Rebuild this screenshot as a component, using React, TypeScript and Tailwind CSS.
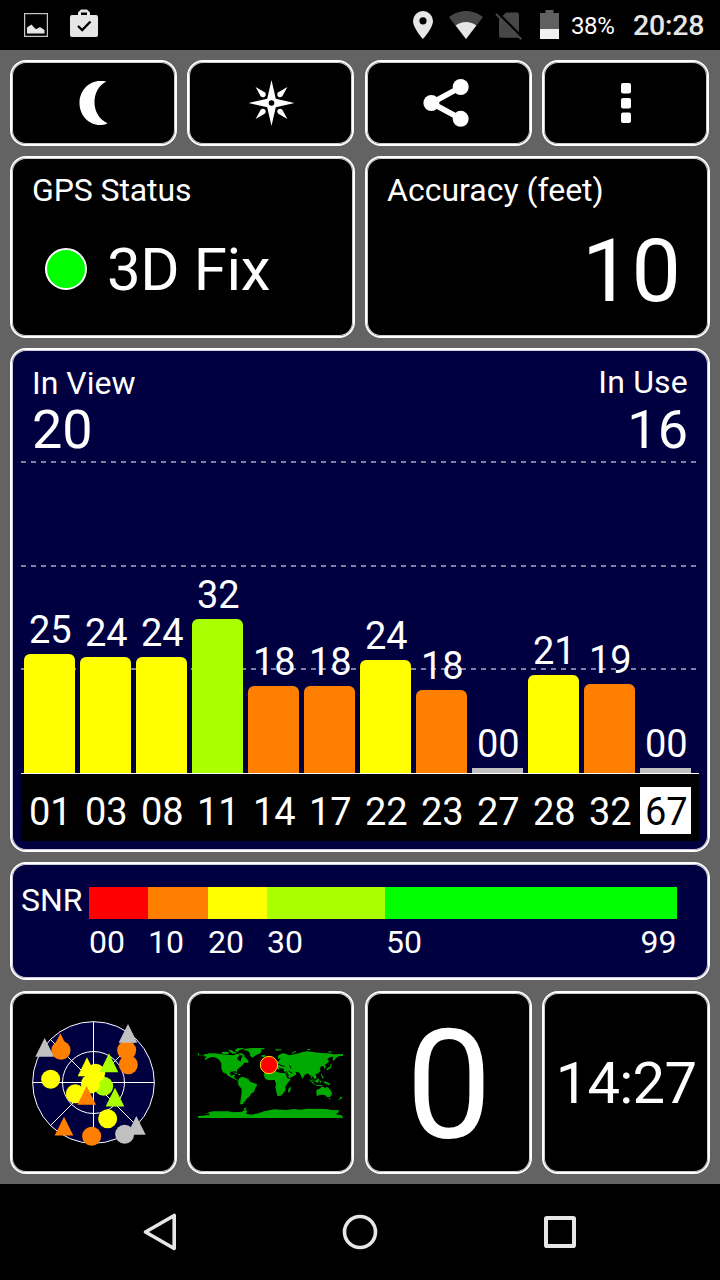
import type { ReactNode } from 'react';

const YELLOW = '#ffff00';
const ORANGE = '#ff8000';
const LIME = '#aaff00';
const SILVER = '#c0c0c0';

type Satellite = { id: string; snr: string; height: number; color: string; selected?: boolean };

const satellites: Satellite[] = [
  { id: '01', snr: '25', height: 119, color: YELLOW },
  { id: '03', snr: '24', height: 116, color: YELLOW },
  { id: '08', snr: '24', height: 116, color: YELLOW },
  { id: '11', snr: '32', height: 154, color: LIME },
  { id: '14', snr: '18', height: 87, color: ORANGE },
  { id: '17', snr: '18', height: 87, color: ORANGE },
  { id: '22', snr: '24', height: 113, color: YELLOW },
  { id: '23', snr: '18', height: 83, color: ORANGE },
  { id: '27', snr: '00', height: 5, color: SILVER },
  { id: '28', snr: '21', height: 98, color: YELLOW },
  { id: '32', snr: '19', height: 89, color: ORANGE },
  { id: '67', snr: '00', height: 5, color: SILVER, selected: true },
];

function Card({ className, children }: { className: string; children: ReactNode }) {
  return (
    <div
      className={`shrink-0 overflow-hidden rounded-2xl border-2 border-white shadow-[inset_0_0_0_1px_rgba(255,255,255,0.8)] ${className}`}
    >
      {children}
    </div>
  );
}

function StatusBar() {
  return (
    <header className="flex h-[50px] shrink-0 items-start bg-black">
      <svg className="mt-[13px] ml-6 shrink-0" width="24" height="24" viewBox="0 0 24 24">
        <rect x=".6" y=".6" width="22.8" height="22.8" fill="none" stroke="#c8c8c8" strokeWidth="1.2" />
        <path d="M3 20.5V14.5L7.5 11.5L11 15.5L12.5 16L16 14L20.5 17V20.5Z" fill="#e6e6e6" />
      </svg>
      <svg className="mt-[9px] ml-[22px] shrink-0" width="28" height="28" viewBox="0 0 28 28">
        <path
          fillRule="evenodd"
          d="M2 6H8V3.500L11 .500H17L20 3.500V6H26Q28 6 28 8V25.500Q28 28 26 28H2Q0 28 0 25.500V8Q0 6 2 6ZM11 6H17V3.500H11Z"
          fill="#e6e6e6"
        />
        <path d="M8 17L12.200 21L20.500 12.500" fill="none" stroke="#000" strokeWidth="2.400" />
      </svg>
      <svg className="mt-[11px] ml-[315px] shrink-0" width="20" height="28" viewBox="0 0 20 28">
        <path
          fillRule="evenodd"
          d="M10 0A10 10 0 0 0 0 10C0 17 10 28 10 28S20 17 20 10A10 10 0 0 0 10 0ZM10 6.200A3.600 3.600 0 1 1 10 13.400A3.600 3.600 0 0 1 10 6.200Z"
          fill="#e6e6e6"
        />
      </svg>
      <svg className="mt-[11px] ml-4 shrink-0" width="34" height="28" viewBox="0 0 34 28">
        <path d="M17 28L0 6.200C4.500 2.500 10.500 0 17 0S29.500 2.500 34 6.200Z" fill="#474747" />
        <path d="M17 28L6.700 14.600Q11 11 17 11T27.300 14.600Z" fill="#e6e6e6" />
      </svg>
      <svg className="mt-3 ml-3 shrink-0" width="27" height="28" viewBox="0 0 27 28">
        <path d="M11 .5H22Q24 .5 24 2.500V25.700H5.500Q4 25.700 4 24V7.500Z" fill="#474747" />
        <path d="M3 1L29 27" stroke="#000" strokeWidth="2.400" />
        <path d="M1 2L26.300 27.300" stroke="#474747" strokeWidth="2" />
      </svg>
      <svg className="mt-[10px] ml-[18px] shrink-0" width="19" height="29" viewBox="0 0 19 29">
        <path d="M0 3H5.500V0H13.500V3H19V19H0Z" fill="#606060" />
        <rect y="19" width="19" height="10" fill="#f0f0f0" />
      </svg>
      <span className="mt-[14px] ml-3 w-[49px] text-[24px] leading-none tracking-[-0.4px]">38%</span>
      <span className="mt-[12px] ml-[13px] text-[28.5px] leading-none font-medium tracking-[-0.2px] text-[#e6e6e6]">
        20:28
      </span>
    </header>
  );
}

function Toolbar() {
  const button = 'flex h-[86px] items-center justify-center bg-black';
  return (
    <div className="flex gap-[10px]">
      <Card className={`${button} w-[167px]`}>
        <svg width="48" height="48" viewBox="-24 -24 48 48">
          <path
            d="M12.300 -21.400C-3.500 -13.500 -3.800 12.500 13.500 20.300C11 22 8 22 6 22C-5.500 22 -14.500 12 -14.500 0S-5.500 -22 6 -22C8.500 -22 10.500 -22 12.300 -21.400Z"
            fill="#fff"
          />
        </svg>
      </Card>
      <Card className={`${button} w-[167px]`}>
        <svg width="48" height="48" viewBox="-24 -24 48 48">
          <g fill="#fff">
            <path d="M.5 -23L4.800 -4.300L23.500 0L4.800 4.300L.500 23L-3.800 4.300L-22.500 0L-3.800 -4.300Z" />
            {[45, 135, 225, 315].map((angle) => (
              <path
                key={angle}
                d="M0 -22.500L2.800 -12.500Q2.800 -9.500 0 -9.300Q-2.800 -9.500 -2.800 -12.500Z"
                transform={`translate(.5 0) rotate(${angle})`}
              />
            ))}
          </g>
          <circle cx=".5" cy="0" r="2.800" fill="#000" />
        </svg>
      </Card>
      <Card className={`${button} ml-px w-[167px]`}>
        <svg width="52" height="48" viewBox="-26 -24 52 48">
          <path d="M11.700 -15.900L-17.500 0L11.700 15.800" fill="none" stroke="#fff" strokeWidth="5.600" />
          <g fill="#fff">
            <circle cx="11.700" cy="-16" r="8" />
            <circle cx="-17.600" cy="0" r="8" />
            <circle cx="11.700" cy="15.800" r="8" />
          </g>
        </svg>
      </Card>
      <Card className={`${button} w-[167px]`}>
        <svg width="10" height="40" viewBox="0 0 10 40">
          <g fill="#fff">
            <rect width="10" height="10.500" rx="2" />
            <rect y="15" width="10" height="10.500" rx="2" />
            <rect y="29.500" width="10" height="10.500" rx="2" />
          </g>
        </svg>
      </Card>
    </div>
  );
}

function FixRow() {
  return (
    <div className="flex gap-[10px]">
      <Card className="h-[182px] w-[345px] bg-black">
        <div className="mt-4 ml-5 text-[32px] leading-none tracking-[-0.1px]">GPS Status</div>
        <div className="mt-[34px] ml-[33px] flex items-start">
          <span className="mt-[8px] size-[42px] rounded-full border-2 border-white bg-[#00ff00]" />
          <span className="ml-[20px] text-[60px] leading-none tracking-[-0.4px]">3D Fix</span>
        </div>
      </Card>
      <Card className="h-[182px] w-[345px] bg-black">
        <div className="mt-4 ml-5 text-[32px] leading-none">Accuracy (feet)</div>
        <div className="mt-[21px] mr-[27px] text-right text-[88px] leading-none">10</div>
      </Card>
    </div>
  );
}

function SignalChart() {
  return (
    <Card className="flex h-[504px] flex-col bg-[#000040] px-[9px] pt-[17px]">
      <div className="flex h-[94px] justify-between px-[11px]">
        <div>
          <div className="text-[32px] leading-none">In View</div>
          <div className="mt-[4px] text-[54px] leading-none">20</div>
        </div>
        <div className="-mt-px text-right">
          <div className="text-[32px] leading-none tracking-[0.2px]">In Use</div>
          <div className="mt-[5px] text-[54px] leading-none">16</div>
        </div>
      </div>
      <div className="relative flex h-[313px] w-[678px] items-end gap-[5px] border-b border-white pl-[3px]">
        <svg className="absolute top-0 left-0" width="678" height="312" viewBox="0 0 678 312">
          <path
            d="M0 1H676M0 105H676M0 208H676"
            fill="none"
            stroke="#8080a0"
            strokeWidth="2"
            strokeDasharray="5 5"
          />
        </svg>
        {satellites.map((sat) => (
          <div key={sat.id} className="relative flex w-[51px] flex-col items-center">
            <span className="mb-[5px] pl-[1.5px] text-[38px] leading-none">{sat.snr}</span>
            <span
              className={sat.height > 10 ? 'w-full rounded-t-[6px]' : 'w-full'}
              style={{ height: sat.height, backgroundColor: sat.color }}
            />
          </div>
        ))}
      </div>
      <div className="flex h-[67px] w-[678px] gap-[5px] bg-black pt-[13px] pl-[3px]">
        {satellites.map((sat) => (
          <div
            key={sat.id}
            className={`h-[47px] w-[51px] pt-[6px] pl-[1.5px] text-center text-[38px] leading-none ${
              sat.selected ? 'bg-white text-black' : 'text-white'
            }`}
          >
            {sat.id}
          </div>
        ))}
      </div>
    </Card>
  );
}

function SnrLegend() {
  return (
    <Card className="flex h-[118px] bg-[#000040] pl-[9px]">
      <div className="mt-[20px] w-[68px] text-[32px] leading-none">SNR</div>
      <div className="mt-[23px] w-[587.5px]">
        <div className="flex h-8">
          <div className="w-[59px] bg-[#ff0000]" />
          <div className="w-[60px] bg-[#ff8000]" />
          <div className="w-[59px] bg-[#ffff00]" />
          <div className="w-[118px] bg-[#aaff00]" />
          <div className="flex-1 bg-[#00ff00]" />
        </div>
        <div className="mt-[7px] flex text-[32px] leading-none">
          <span className="w-[59px]">00</span>
          <span className="w-[60px]">10</span>
          <span className="w-[59px]">20</span>
          <span className="w-[119px]">30</span>
          <span>50</span>
          <span className="ml-auto">99</span>
        </div>
      </div>
    </Card>
  );
}

const skyMarks: { x: number; y: number; color: string; shape: 'circle' | 'triangle' }[] = [
  { x: 151, y: 158, color: ORANGE, shape: 'triangle' },
  { x: 153, y: 181, color: ORANGE, shape: 'circle' },
  { x: 104, y: 172, color: SILVER, shape: 'triangle' },
  { x: 350, y: 181, color: ORANGE, shape: 'circle' },
  { x: 354, y: 130, color: SILVER, shape: 'triangle' },
  { x: 355, y: 224, color: ORANGE, shape: 'circle' },
  { x: 231, y: 230, color: YELLOW, shape: 'triangle' },
  { x: 281, y: 289, color: LIME, shape: 'circle' },
  { x: 257, y: 250, color: YELLOW, shape: 'circle' },
  { x: 196, y: 311, color: YELLOW, shape: 'circle' },
  { x: 241, y: 282, color: YELLOW, shape: 'circle' },
  { x: 297, y: 218, color: LIME, shape: 'triangle' },
  { x: 230, y: 316, color: ORANGE, shape: 'triangle' },
  { x: 315, y: 321, color: LIME, shape: 'triangle' },
  { x: 122, y: 268, color: YELLOW, shape: 'circle' },
  { x: 293, y: 386, color: YELLOW, shape: 'circle' },
  { x: 162, y: 408, color: ORANGE, shape: 'triangle' },
  { x: 245, y: 439, color: ORANGE, shape: 'circle' },
  { x: 379, y: 406, color: SILVER, shape: 'triangle' },
  { x: 344, y: 433, color: SILVER, shape: 'circle' },
];

function SkyPlot() {
  return (
    <svg width="126" height="129" viewBox="60 87 378 387">
      <circle cx="250.500" cy="277.500" r="183" fill="#000040" />
      <g fill="none" stroke="#fff" strokeWidth="3">
        <circle cx="250.500" cy="277.500" r="182.500" />
        <circle cx="250.500" cy="277.500" r="93" />
        <path d="M250.500 95V460M68 277.500H433M121 148L380 407M380 148L121 407" />
      </g>
      {skyMarks.map((m) =>
        m.shape === 'circle' ? (
          <circle key={`${m.x}-${m.y}`} cx={m.x} cy={m.y} r="28.500" fill={m.color} />
        ) : (
          <path
            key={`${m.x}-${m.y}`}
            d="M0 -28L28 28.500H-28Z"
            transform={`translate(${m.x} ${m.y})`}
            fill={m.color}
          />
        ),
      )}
    </svg>
  );
}

function WorldMap() {
  return (
    <svg width="150" height="76" viewBox="0 0 450 228">
      <g fill="#00aa00">
        <path d="M6 27H9V32H15V34H25V30H36V28H54L78 31L94 32L112 34L122 29L128 30L130 36L124 41L126 48L134 52L136 43L140 35L148 40L156 49L158 55H150L144 58L138 65L130 71L124 77L122 87L118 81L104 83L102 91L106 96L112 92H118L114 99L118 104L126 108V110L116 106L104 100L94 94L86 84L88 91L80 83L76 73V58L70 48L60 41L48 39L38 42L28 48L26 42L34 39L22 36V33L6 34Z" />
        <path d="M75 26L82 23H94L100 27L96 30H82ZM96 19L106 18L113 23L104 25ZM103 24L118 23L122 27L110 29ZM116 18L124 13L146 12L140 16L130 18L126 24L120 22ZM126 28L138 28L150 38L143 36L132 33Z" />
        <path d="M140 18L150 14L166 12H205V16H196V22L193 28L181 33L173 38L169 41L163 36L160 25L154 20Z" />
        <path d="M196 34L206 33L209 37L202 40L196 37ZM112 85L123 88V90L112 87ZM126 90H133V93H126ZM148 53H157V56H148Z" />
        <path d="M130 102L138 98L148 101L158 106L162 113L180 119L184 123L178 132L174 143L164 151L160 158L152 164L148 171L142 176L141 181H132L134 166L137 146V135L127 123L126 112Z" />
        <path d="M205 81L220 79L239 82L252 86L268 88L274 103L284 106L274 119L268 128L269 138L260 150L254 155L244 156L241 143L238 130L240 120L236 108L218 109L208 105L204 96Z" />
        <path d="M277 135L284 128L285 132L281 145L276 145Z" />
        <path d="M212 72V62H220L226 54L236 51L246 53L252 47L246 45L246 35L255 29L265 28L272 31L280 34L300 30L311 27L318 24L336 22L356 25L374 27L398 28L412 31L441 30V36H430L420 42L413 52L410 45L412 38L402 40L394 45L399 52L392 59L386 62L390 70L385 75L384 68L376 65L371 75L374 80L367 88L358 91L362 99L357 107L351 99L346 94L349 106L358 115L350 110L342 94L335 88L325 94L320 105L315 96L311 86L298 83L302 91L292 97L280 103L270 88L263 80V74H257L248 70L252 77L244 75L235 67L227 72L219 77Z" />
        <path d="M242 17L256 16V19L244 20ZM286 30L290 25L300 20V23L292 28ZM335 15L342 15V18L334 19ZM396 21L412 24L400 26ZM217 45L223 50L224 56H216L219 51ZM237 16H246V19H237Z" />
        <path d="M390 77L397 70L402 69L404 60H407L405 71L394 79ZM376 87L380 96L384 103H379L376 97ZM340 105L348 111L356 119L353 121L342 110ZM357 110L366 103L369 107L366 117L359 115ZM370 109L376 112L372 119ZM353 121L367 123L380 124V127L362 125ZM379 112L390 113L403 119L401 124L389 119Z" />
        <path d="M361 138L371 134L376 129L384 129L387 134L391 128L397 131L406 142L408 150L402 159L394 160L386 153L374 152L363 156L361 148ZM398 163H403V166H398ZM432 158L439 161L436 165H431ZM427 166L432 165L428 171Z" />
        <path d="M6 216L40 213V209H28V208H40L36 205L52 202H98L110 205L138 203L146 198L142 195L150 190L152 193L148 197L154 202L150 209L166 212L186 208L204 202L234 196L270 198L294 195L314 197L334 194L392 195L406 198L430 199L426 207L418 210L440 215V222H6Z" />
      </g>
      <g stroke="#000" strokeWidth="3" fill="none">
        <path d="M252 64L266 67M244 47L253 44M250 76H263M270 81L278 97M281 64L285 74M278 81L289 88M244 61H253" />
      </g>
      <circle cx="219" cy="63" r="26" fill="#ff0000" stroke="#ffe000" strokeWidth="3" />
    </svg>
  );
}

function BottomRow() {
  return (
    <div className="mt-px flex gap-[10px]">
      <Card className="h-[183px] w-[167px] bg-black">
        <div className="mt-[26px] ml-[18px]">
          <SkyPlot />
        </div>
      </Card>
      <Card className="h-[183px] w-[167px] bg-black">
        <div className="mt-[51px] ml-[7px]">
          <WorldMap />
        </div>
      </Card>
      <Card className="ml-px h-[183px] w-[167px] bg-black pt-[16px] pl-px text-center text-[153px] leading-none">
        0
      </Card>
      <Card className="flex h-[183px] w-[168px] justify-center bg-black pt-[61px] text-[58px] leading-none tracking-[-0.8px]">
        14:27
      </Card>
    </div>
  );
}

function NavigationBar() {
  return (
    <nav className="flex h-24 shrink-0 items-center justify-center gap-[160px] bg-black">
      <svg width="40" height="40" viewBox="-20 -20 40 40">
        <path d="M14.200 -16.500V16.500L-14.500 0Z" fill="none" stroke="#e6e6e6" strokeWidth="3.600" strokeLinejoin="round" />
      </svg>
      <svg width="40" height="40" viewBox="-20 -20 40 40">
        <circle r="15.500" fill="none" stroke="#e6e6e6" strokeWidth="3.600" />
      </svg>
      <svg width="40" height="40" viewBox="-20 -20 40 40">
        <rect x="-14" y="-14" width="28" height="28" rx=".8" fill="none" stroke="#e6e6e6" strokeWidth="4" strokeLinejoin="round" />
      </svg>
    </nav>
  );
}

export default function App() {
  return (
    <div className="flex h-[1280px] w-[720px] flex-col overflow-hidden bg-black font-['Roboto',sans-serif] text-white">
      <StatusBar />
      <main className="flex h-[1134px] shrink-0 flex-col gap-[10px] bg-[#636363] p-[10px]">
        <Toolbar />
        <FixRow />
        <SignalChart />
        <SnrLegend />
        <BottomRow />
      </main>
      <NavigationBar />
    </div>
  );
}
